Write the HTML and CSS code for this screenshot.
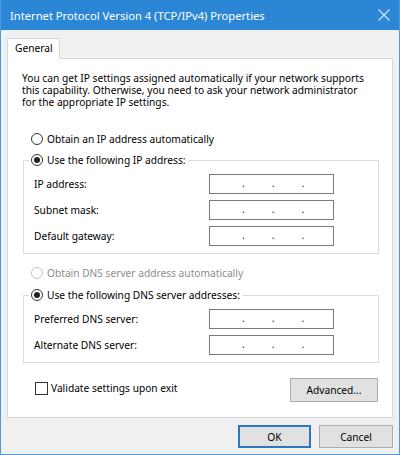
FILE: index.html
```html
<!DOCTYPE html>
<html lang="en">
<head>
<meta charset="utf-8">
<title>Internet Protocol Version 4 (TCP/IPv4) Properties</title>
<link rel="stylesheet" href="styles.css">
</head>
<body>
<div class="window">
  <div class="titlebar">
    <span class="title">Internet Protocol Version 4 (TCP/IPv4) Properties</span>
    <svg class="close" width="12" height="12" viewBox="0 0 12 12"><path d="M0.5 0.5 L11.5 11.5 M11.5 0.5 L0.5 11.5" stroke="#d8eaf9" stroke-width="1.1" fill="none"/></svg>
  </div>
  <div class="body">
    <div class="tabs"><div class="tab">General</div></div>
    <div class="panel">
      <p class="desc">You can get IP settings assigned automatically if your network supports<br>this capability. Otherwise, you need to ask your network administrator<br>for the appropriate IP settings.</p>
      <div class="radio-row first"><span class="radio"></span><span>Obtain an IP address automatically</span></div>
      <fieldset class="group">
        <legend class="legend"><span class="radio checked"></span><span>Use the following IP address:</span></legend>
        <div class="field"><span class="label">IP address:</span><div class="ip"><span>.</span><span>.</span><span>.</span></div></div>
        <div class="field"><span class="label">Subnet mask:</span><div class="ip"><span>.</span><span>.</span><span>.</span></div></div>
        <div class="field"><span class="label">Default gateway:</span><div class="ip"><span>.</span><span>.</span><span>.</span></div></div>
      </fieldset>
      <div class="radio-row disabled"><span class="radio"></span><span>Obtain DNS server address automatically</span></div>
      <fieldset class="group dns">
        <legend class="legend"><span class="radio checked"></span><span>Use the following DNS server addresses:</span></legend>
        <div class="field"><span class="label">Preferred DNS server:</span><div class="ip"><span>.</span><span>.</span><span>.</span></div></div>
        <div class="field"><span class="label">Alternate DNS server:</span><div class="ip"><span>.</span><span>.</span><span>.</span></div></div>
      </fieldset>
      <div class="bottom-row">
        <div class="check-row"><span class="check"></span><span>Validate settings upon exit</span></div>
        <button class="btn advanced">Advanced...</button>
      </div>
    </div>
    <div class="buttons">
      <button class="btn ok">OK</button>
      <button class="btn cancel">Cancel</button>
    </div>
  </div>
</div>
</body>
</html>
```
FILE: styles.css
```css
* { box-sizing: border-box; }
html, body { margin: 0; padding: 0; }
body {
  font-family: "Noto Sans", "DejaVu Sans", sans-serif;
  font-size: 10.2px;
  color: #000;
  background: #f0f0f0;
}
.window {
  width: 400px;
  height: 455px;
  border: 1px solid #4a9ae0;
  border-top: none;
  background: #f0f0f0;
  display: flex;
  flex-direction: column;
}
.titlebar {
  height: 30px;
  background: #2b87d6;
  color: #fff;
  display: flex;
  align-items: center;
  justify-content: space-between;
  padding: 0 9px 0 9px;
  font-size: 11.2px;
  flex-shrink: 0;
}
.title { white-space: nowrap; }
.close { display: block; }
.body { padding: 8px 6px 0 6px; }
.tabs { display: flex; }
.tab {
  width: 53px;
  height: 21px;
  border: 1px solid #d9d9d9;
  border-bottom: none;
  background: #fff;
  position: relative;
  z-index: 1;
  margin-bottom: -1px;
  padding-left: 7px;
  line-height: 18px;
}
.panel {
  height: 360px;
  border: 1px solid #d9d9d9;
  background: #fff;
  padding: 13px 0 0 14px;
}
.desc { margin: 0; line-height: 12px; white-space: nowrap; }
.radio-row {
  display: flex;
  align-items: center;
  gap: 4px;
  height: 14px;
  margin-left: 9px;
}
.radio-row.first { margin-top: 24px; }
.radio-row.disabled { margin-top: 12px; color: #8d8d8d; }
.radio {
  width: 12px;
  height: 12px;
  border: 1px solid #333;
  border-radius: 50%;
  background: #fff;
  display: flex;
  align-items: center;
  justify-content: center;
  flex-shrink: 0;
}
.radio.checked::after {
  content: "";
  width: 6px;
  height: 6px;
  border-radius: 50%;
  background: #222;
}
.radio-row.disabled .radio { border-color: #c4c4c4; }
.group {
  margin: 7px 0 0 1px;
  width: 356px;
  min-width: 0;
  border: 1px solid #dcdcdc;
  padding: 7px 0 7px 5px;
}
.group.dns { margin-top: 8px; }
.legend {
  display: flex;
  align-items: center;
  gap: 4px;
  height: 14px;
  padding: 0 2px;
}
.field {
  display: flex;
  align-items: center;
  height: 20px;
  padding-left: 5px;
}
.field + .field { margin-top: 6px; }
.label { width: 175px; flex-shrink: 0; }
.ip {
  width: 125px;
  height: 20px;
  border: 1px solid #7a7a7a;
  display: flex;
  align-items: center;
  padding: 0 0 2px 32px;
  gap: 27px;
  color: #222;
}
.bottom-row {
  width: 356px;
  margin: 15px 0 0 1px;
  padding: 0 1px 0 12px;
  display: flex;
  justify-content: space-between;
  align-items: flex-start;
}
.check-row {
  display: flex;
  align-items: center;
  gap: 3px;
  margin-top: 3px;
}
.check {
  width: 13px;
  height: 13px;
  border: 1px solid #333;
  background: #fff;
}
.btn {
  font-family: inherit;
  font-size: 10.2px;
  color: #000;
  background: #e1e1e1;
  border: 1px solid #adadad;
  padding: 0;
  margin: 0;
}
.advanced { width: 88px; height: 24px; }
.buttons {
  display: flex;
  justify-content: flex-end;
  gap: 8px;
  margin-top: 7px;
}
.ok { width: 73px; height: 23px; border: 2px solid #2a78bf; }
.cancel { width: 74px; height: 23px; }
```
